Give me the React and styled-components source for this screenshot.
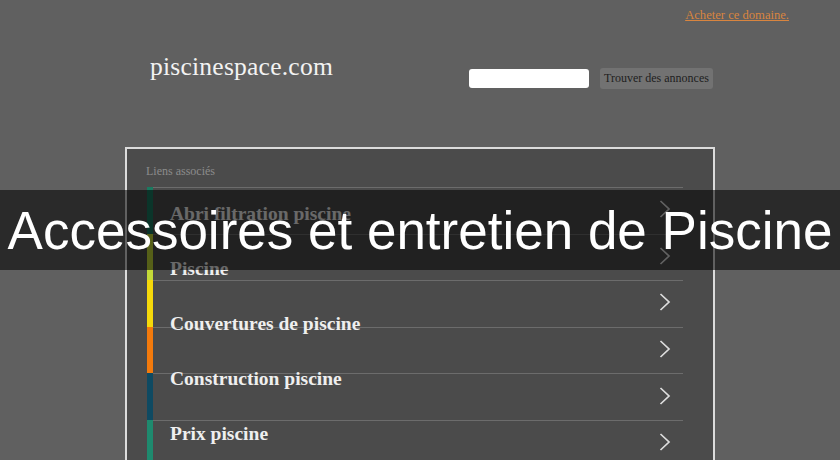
import React from 'react'
import styled, { createGlobalStyle } from 'styled-components'

const GlobalStyle = createGlobalStyle`
  html, body {
    margin: 0;
    padding: 0;
    background: #606060;
  }
  body {
    font-family: "Liberation Serif", "Times New Roman", serif;
    overflow: hidden;
  }
`

const Page = styled.div`
  position: relative;
  width: 840px;
  height: 460px;
  overflow: hidden;
  background: #606060;
`

const TopBar = styled.div`
  width: 740px;
  height: 28px;
  margin: 0 auto;
  box-sizing: border-box;
  padding: 8px 1px 0 0;
  display: flex;
  justify-content: flex-end;
`

const BuyLink = styled.a`
  font-size: 12.6px;
  line-height: 15px;
  color: #d9853f;
  text-decoration: underline;
`

const Header = styled.div`
  width: 590px;
  height: 119px;
  margin: 0 auto;
  display: flex;
  justify-content: space-between;
  align-items: flex-start;
`

const Logo = styled.div`
  margin: 25px 0 0 25px;
  font-size: 25.6px;
  line-height: 28px;
  color: #f2f2f2;
  letter-spacing: 0.2px;
`

const SearchForm = styled.form`
  margin: 40px 2px 0 0;
  display: flex;
  align-items: center;
  gap: 11px;
`

const SearchInput = styled.input`
  width: 120px;
  height: 19px;
  box-sizing: border-box;
  border: none;
  border-radius: 3px;
  background: #fff;
  padding: 0 4px;
`

const SearchButton = styled.button`
  width: 113px;
  height: 21px;
  border: none;
  border-radius: 3px;
  background: #727272;
  color: #1e1e1e;
  font-family: "Liberation Serif", serif;
  font-size: 12px;
  padding: 0;
`

const Panel = styled.section`
  width: 590px;
  height: 400px;
  margin: 0 auto;
  box-sizing: border-box;
  border: 2px solid #dcdcdc;
  border-bottom: none;
  background: #4b4b4b;
  padding: 15px 30px 0 20px;
`

const PanelTitle = styled.div`
  font-size: 12px;
  line-height: 14px;
  color: #8c8c8c;
  margin: 0 0 9px -1px;
`

const Stack = styled.div`
  display: grid;
  & > * {
    grid-area: 1 / 1;
  }
`

const Rows = styled.ul`
  list-style: none;
  margin: 0;
  padding: 0;
`

const Row = styled.li`
  display: flex;
  height: 46.6px;
`

const Bar = styled.span`
  width: 6px;
  background: ${p => p.$color};
`

const RowBody = styled.span`
  flex: 1;
  display: flex;
  align-items: center;
  justify-content: flex-end;
  border-top: 1.5px solid #6c6c6c;
  padding: 0 12px 3px 0;
`

const Titles = styled.ul`
  list-style: none;
  margin: -1.5px 0 0 0;
  padding: 0 0 0 23px;
`

const Title = styled.li`
  height: 55px;
  line-height: 55px;
  font-size: 19.5px;
  font-weight: bold;
  color: #efefef;
  white-space: nowrap;
`

const Banner = styled.div`
  position: absolute;
  left: 0;
  right: 0;
  top: 190px;
  height: 80px;
  background: rgba(0, 0, 0, 0.56);
  display: flex;
  align-items: center;
  justify-content: center;
  font-family: "Liberation Sans", Arial, sans-serif;
  font-size: 53px;
  color: #fff;
  white-space: nowrap;
`

const Chevron = () => (
  <svg width="12" height="18" viewBox="0 0 12 18">
    <polyline points="1.5,1 10,9 1.5,17" fill="none" stroke="#dedede" strokeWidth="1.7" />
  </svg>
)

const links = [
  { label: 'Abri filtration piscine', color: '#1a7a60' },
  { label: 'Piscine', color: '#c5da38' },
  { label: 'Couvertures de piscine', color: '#f6d90a' },
  { label: 'Construction piscine', color: '#f37a0c' },
  { label: 'Prix piscine', color: '#0f4a62' },
  { label: 'Piscines hors sol', color: '#1e8a6e' },
]

export default function App() {
  return (
    <Page>
      <GlobalStyle />
      <TopBar>
        <BuyLink href="#">Acheter ce domaine.</BuyLink>
      </TopBar>
      <Header>
        <Logo>piscinespace.com</Logo>
        <SearchForm onSubmit={e => e.preventDefault()}>
          <SearchInput type="text" />
          <SearchButton type="submit">Trouver des annonces</SearchButton>
        </SearchForm>
      </Header>
      <Panel>
        <PanelTitle>Liens associés</PanelTitle>
        <Stack>
          <Rows>
            {links.map(l => (
              <Row key={l.label}>
                <Bar $color={l.color} />
                <RowBody>
                  <Chevron />
                </RowBody>
              </Row>
            ))}
          </Rows>
          <Titles>
            {links.map(l => (
              <Title key={l.label}>{l.label}</Title>
            ))}
          </Titles>
        </Stack>
      </Panel>
      <Banner>Accessoires et entretien de Piscine</Banner>
    </Page>
  )
}
